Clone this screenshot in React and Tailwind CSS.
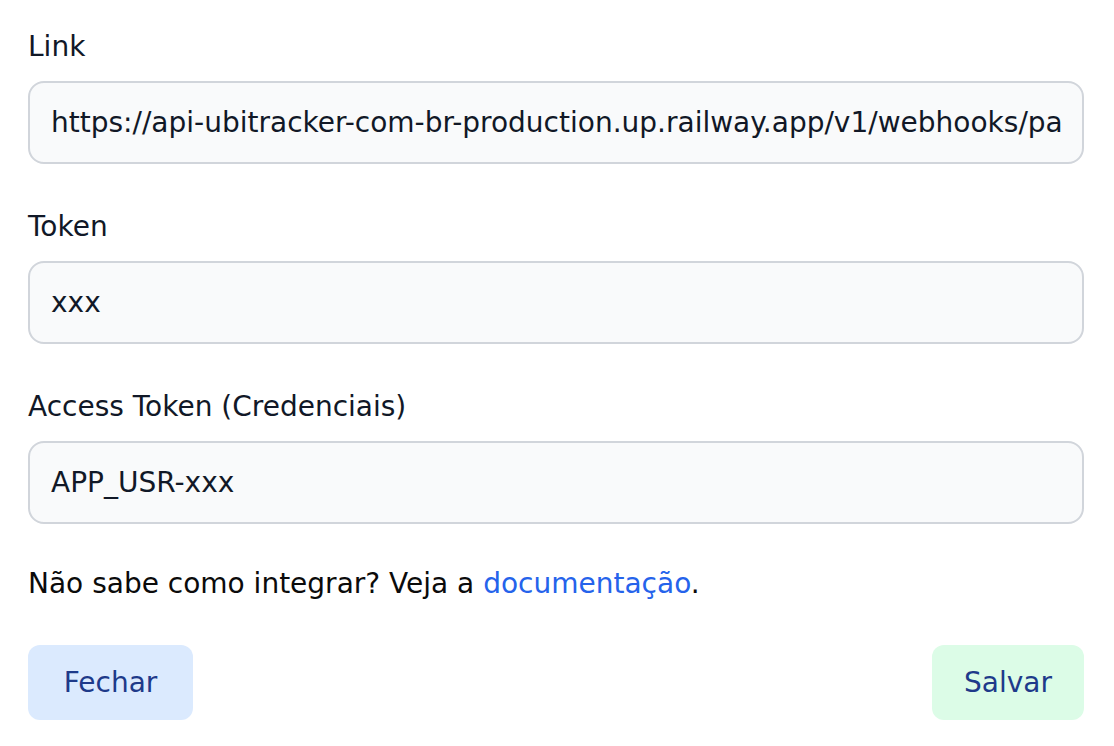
const Field = ({ label, value, last }) => {
  return (
    <div className={last ? "" : "mb-[45px]"}>
      <label className="block text-[28px] leading-[36px] font-medium text-[#111827]">{label}</label>
      <input
        className="mt-[16px] block w-full h-[83px] px-[21px] rounded-[16px] border-2 border-[#d1d5db] bg-[#f9fafb] text-[28px] text-[#111827] outline-none"
        value={value}
        readOnly
      />
    </div>
  );
};

export default function App() {
  return (
    <div
      className="min-h-screen bg-white pl-[28px] pr-[30px] pt-[29px]"
      style={{ fontFamily: '"DejaVu Sans", "Noto Sans", sans-serif' }}
    >
      <Field
        label="Link"
        value="https://api-ubitracker-com-br-production.up.railway.app/v1/webhooks/payments"
      />
      <Field label="Token" value="xxx" />
      <Field label="Access Token (Credenciais)" value="APP_USR-xxx" last />

      <p className="mt-[42px] text-[28px] leading-[36px] text-[#0b0b0b]">
        Não sabe como integrar? Veja a{" "}
        <a href="#" className="text-[#2563eb]">documentação</a>.
      </p>

      <div className="mt-[43px] flex justify-between">
        <button className="w-[165px] h-[75px] rounded-[12px] bg-[#dbeafe] text-[28px] font-medium text-[#1e3a8a]">
          Fechar
        </button>
        <button className="w-[152px] h-[75px] rounded-[12px] bg-[#dcfce7] text-[28px] font-medium text-[#1e3a8a]">
          Salvar
        </button>
      </div>
    </div>
  );
}
